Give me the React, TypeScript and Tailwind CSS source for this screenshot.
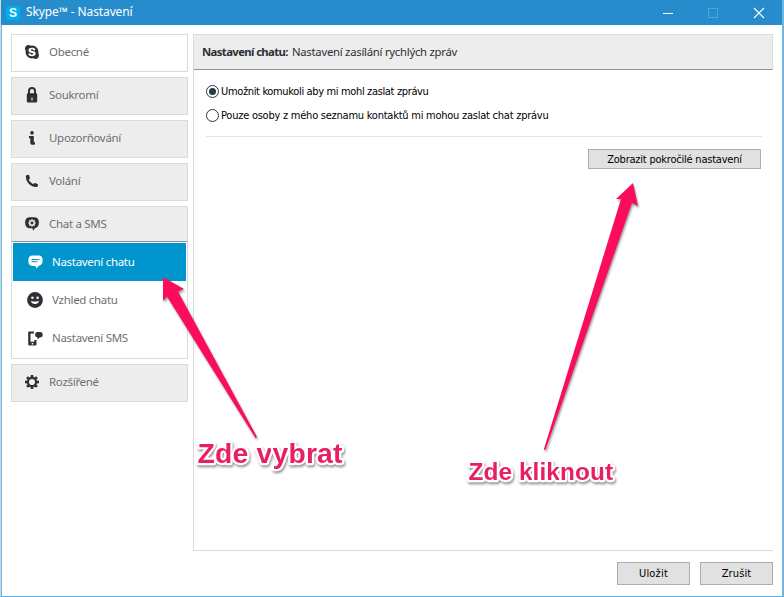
import type { ReactNode } from 'react';
import { FaSkype } from 'react-icons/fa';

const LockIcon = () => (
  <svg width="12" height="16" viewBox="0 0 12 16">
    <path d="M3 7V4a3 3 0 0 1 6 0v3" fill="none" stroke="#2d3035" strokeWidth="2" />
    <path fillRule="evenodd" fill="#2d3035" d="M2 6.200h8a1.200 1.200 0 0 1 1.200 1.200v6.800a1.200 1.200 0 0 1-1.200 1.200H2a1.200 1.200 0 0 1-1.200-1.200V7.400A1.200 1.200 0 0 1 2 6.200zM5.400 10.400v3h1.200v-3z" />
  </svg>
);

const InfoIcon = () => (
  <svg width="8" height="14" viewBox="0 0 8 14" fill="#2d3035">
    <circle cx="4" cy="1.900" r="1.800" />
    <path d="M1 5h4.800v6.300H7V13.400q-1.400 .4-3 .4T2.300 12V7.200H1z" />
  </svg>
);

const PhoneIcon = () => (
  <svg width="14" height="14" viewBox="0 0 14 14">
    <path fill="#2d3035" d="M1.500 1.200L3.300 .8Q4 .7 4.200 1.400L4.900 4Q5 4.600 4.500 5L3.600 5.700Q5.200 8.900 8.300 10.300L9.100 9.300Q9.500 8.900 10.100 9.100L12.500 9.900Q13.200 10.200 13 10.900L12.700 12.300Q12.500 12.900 11.800 12.900Q6.500 13.100 3.300 9.300Q.6 6 .8 2Q.9 1.400 1.500 1.200z" />
  </svg>
);

const teeth = [0, 45, 90, 135, 180, 225, 270, 315];

const GearIcon = () => (
  <svg width="14" height="14" viewBox="-7 -7 14 14">
    <circle r="4.100" fill="none" stroke="#2d3035" strokeWidth="2.100" />
    {teeth.map((a) => (
      <path key={a} d="M-1.500 -4.700L-1.200 -7H1.200L1.500 -4.700z" fill="#2d3035" transform={`rotate(${a})`} />
    ))}
  </svg>
);

const ChatGearIcon = () => (
  <svg width="14" height="14" viewBox="0 0 14 14">
    <path d="M5 .3h4Q13.900 .3 13.900 5.500Q13.900 10 9.900 11.300L8 13.700L7.500 11.300H5Q.1 11.100 .1 5.700Q.1 .3 5 .3z" fill="#2d3035" />
    <g transform="translate(7 5.900)">
      <circle r="2.200" fill="none" stroke="#ededed" strokeWidth="1.500" />
      {teeth.map((a) => (
        <path key={a} d="M-.6 -2.600V-3.800H.6V-2.600z" fill="#ededed" transform={`rotate(${a})`} />
      ))}
    </g>
  </svg>
);

const BubbleIcon = () => (
  <svg width="15" height="14" viewBox="0 0 15 14">
    <path d="M4.500 .4h6Q14.700 .4 14.700 5.300Q14.700 9.800 11 10.700L8.200 13.600L7.600 10.900H4.500Q.3 10.700 .3 5.600Q.3 .4 4.500 .4z" fill="#fff" />
    <path d="M3.500 4.500h8M3.500 6.700h6" stroke="#0095cc" strokeWidth="1" />
  </svg>
);

const SmileIcon = () => (
  <svg width="16" height="16" viewBox="0 0 16 16">
    <circle cx="8" cy="8" r="7.900" fill="#2d3035" />
    <circle cx="5.400" cy="5.800" r="1.200" fill="#fff" />
    <circle cx="10.600" cy="5.800" r="1.200" fill="#fff" />
    <path d="M3.900 8.700Q8 10.400 12.100 8.700Q11.200 12 8 12T3.900 8.700z" fill="#fff" />
  </svg>
);

const SmsIcon = () => (
  <svg width="15" height="15" viewBox="0 0 15 15">
    <path fillRule="evenodd" fill="#2d3035" d="M1.500 .5H6V2.500H2.500V10.800H6.300V9H8.500V13.500a1 1 0 0 1-1 1H1.200a1 1 0 0 1-1-1V1.500a1 1 0 0 1 1-1zM3.700 12v1.400h1.500V12z" />
    <path fill="#2d3035" d="M9.700 1h2.300Q14.700 1 14.700 3.700T12.100 6.300L9.600 8.200L9.300 6.300Q7.100 6.200 7.100 3.700T9.700 1z" />
  </svg>
);

function Section({ icon, label, active = false }: { icon: ReactNode; label: string; active?: boolean }) {
  return (
    <div className={`flex h-[38px] shrink-0 items-center border border-[#d7dbdc] pl-[10px] ${active ? 'bg-white' : 'bg-[#ededed]'}`}>
      <span className="flex w-5 justify-center pb-[2px]">{icon}</span>
      <span className="ml-[7px] pb-[2px]">{label}</span>
    </div>
  );
}

function SubItem({ icon, label, selected = false }: { icon: ReactNode; label: string; selected?: boolean }) {
  return (
    <div className={`flex h-[38px] items-center pl-[12px] ${selected ? 'bg-[#0095cc] text-white' : ''}`}>
      <span className="flex w-5 justify-center">{icon}</span>
      <span className="ml-[7px]">{label}</span>
    </div>
  );
}

function Radio({ label, checked = false }: { label: ReactNode; checked?: boolean }) {
  return (
    <div className="flex h-6 items-center">
      <span className="mb-px flex size-[13px] shrink-0 items-center justify-center rounded-full border border-[#333] bg-white">
        {checked && <span className="size-[7px] rounded-full bg-[#263c46]" />}
      </span>
      {label}
    </div>
  );
}

export default function App() {
  return (
    <div className="relative flex h-[597px] w-[784px] flex-col overflow-hidden border-b border-l border-r-2 border-b-[#5eb1e2] border-l-[#c5dcec] border-r-[#6eb5df] bg-white font-['Noto_Sans',sans-serif] text-[11.500px] text-[#6c7075]">
      <header className="flex h-[25px] shrink-0 items-center bg-[#278ccb] text-white">
        <span className="ml-[5px] flex size-[14px] items-center justify-center rounded-[3px] bg-[#00aff0] font-['Liberation_Sans',sans-serif] text-[12px] font-bold leading-none">S</span>
        <span className="ml-[6px] pb-px text-[12px] tracking-[-0.120px]">Skype™ - Nastavení</span>
        <svg className="ml-auto mr-[15px]" width="106" height="12" viewBox="0 0 106 12" fill="none" stroke="#fff">
          <path d="M2 6.500h10" />
          <rect x="47.500" y="1.500" width="9" height="9" stroke="#4ba6dc" />
          <path d="M93 1l10 10M103 1l-10 10" strokeWidth="1.200" />
        </svg>
      </header>

      <div className="flex grow border-l border-[#79b4d8]">
        <nav className="ml-[9px] mt-[9px] flex w-[177px] flex-col gap-[5px] tracking-[-0.300px]">
          <Section icon={<FaSkype size={16} color="#2d3035" />} label="Obecné" active />
          <Section icon={<LockIcon />} label="Soukromí" />
          <Section icon={<InfoIcon />} label="Upozorňování" />
          <Section icon={<PhoneIcon />} label="Volání" />
          <div className="h-[153px] border border-[#d7dbdc]">
            <div className="flex h-[35px] items-center border-b border-[#8e9699] bg-[#ededed] pl-[10px]">
              <span className="flex w-5 justify-center"><ChatGearIcon /></span>
              <span className="ml-[7px]">Chat a SMS</span>
            </div>
            <div className="mx-px mt-px">
              <SubItem icon={<BubbleIcon />} label="Nastavení chatu" selected />
              <SubItem icon={<SmileIcon />} label="Vzhled chatu" />
              <SubItem icon={<SmsIcon />} label="Nastavení SMS" />
            </div>
          </div>
          <Section icon={<GearIcon />} label="Rozšířené" />
        </nav>

        <div className="ml-[5px] mr-[9px] mt-[9px] flex grow flex-col">
          <main className="flex h-[517px] flex-col border-b border-l border-[#d7dbdc]">
            <div className="flex h-9 items-center border-b border-r border-t border-b-[#8e9699] border-r-[#d7dbdc] border-t-[#d7dbdc] bg-[#ededed] pl-2 text-[11.300px] text-[#2d3035]">
              <b className="tracking-[-0.600px]">Nastavení chatu:</b>
              <span className="ml-1 tracking-[-0.250px]">Nastavení zasílání rychlých zpráv</span>
            </div>
            <div className="ml-[12px] mr-[11px] flex h-[67px] flex-col border-b border-[#e3e5e6] pt-[10px] font-['DejaVu_Sans_Condensed','DejaVu_Sans',sans-serif] text-[11px] text-black">
              <Radio checked label={<span className="ml-[2px] pt-px tracking-[-0.350px]">Umožnit komukoli aby mi mohl zaslat zprávu</span>} />
              <Radio label={<span className="ml-[2px] pt-px tracking-[-0.240px]">Pouze osoby z mého seznamu kontaktů mi mohou zaslat chat zprávu</span>} />
            </div>
            <button className="ml-auto mr-[12px] mt-3 h-[20px] w-[173px] border border-[#adadad] bg-[#e1e1e1] font-['DejaVu_Sans_Condensed','DejaVu_Sans',sans-serif] text-[11px] leading-none tracking-[-0.220px] text-black">Zobrazit pokročilé nastavení</button>
          </main>
          <footer className="mt-[11px] flex justify-end gap-[10px] font-['DejaVu_Sans_Condensed','DejaVu_Sans',sans-serif] text-[11px] text-black">
            <button className="h-[23px] w-[73px] border border-[#adadad] bg-[#e1e1e1] pt-px tracking-[0.200px]">Uložit</button>
            <button className="h-[23px] w-[73px] border border-[#adadad] bg-[#e1e1e1] pt-px tracking-[0.100px]">Zrušit</button>
          </footer>
        </div>
      </div>

      <svg className="absolute -left-px top-0 drop-shadow-[1px_2px_1px_rgba(0,0,0,0.4)]" width="784" height="597" viewBox="0 0 784 597">
        <g fill="#fb0d5c">
          <path d="M163 277L184 289L178 291.500L257 437L255.500 438L167 296.500L163 301z" />
          <path d="M633 183L638 206L632 203L545.500 450L543.800 449.500L621 199L616 199z" />
        </g>
        <g fill="#e91e63" stroke="#fff" strokeWidth="4.500" strokeLinejoin="round" paintOrder="stroke" fontFamily="Liberation Sans, sans-serif" fontWeight="700">
          <text x="197.500" y="463" fontSize="28.300" textLength="145">Zde vybrat</text>
          <text x="468.500" y="480" fontSize="24.400" textLength="144.500">Zde kliknout</text>
        </g>
      </svg>
    </div>
  );
}
